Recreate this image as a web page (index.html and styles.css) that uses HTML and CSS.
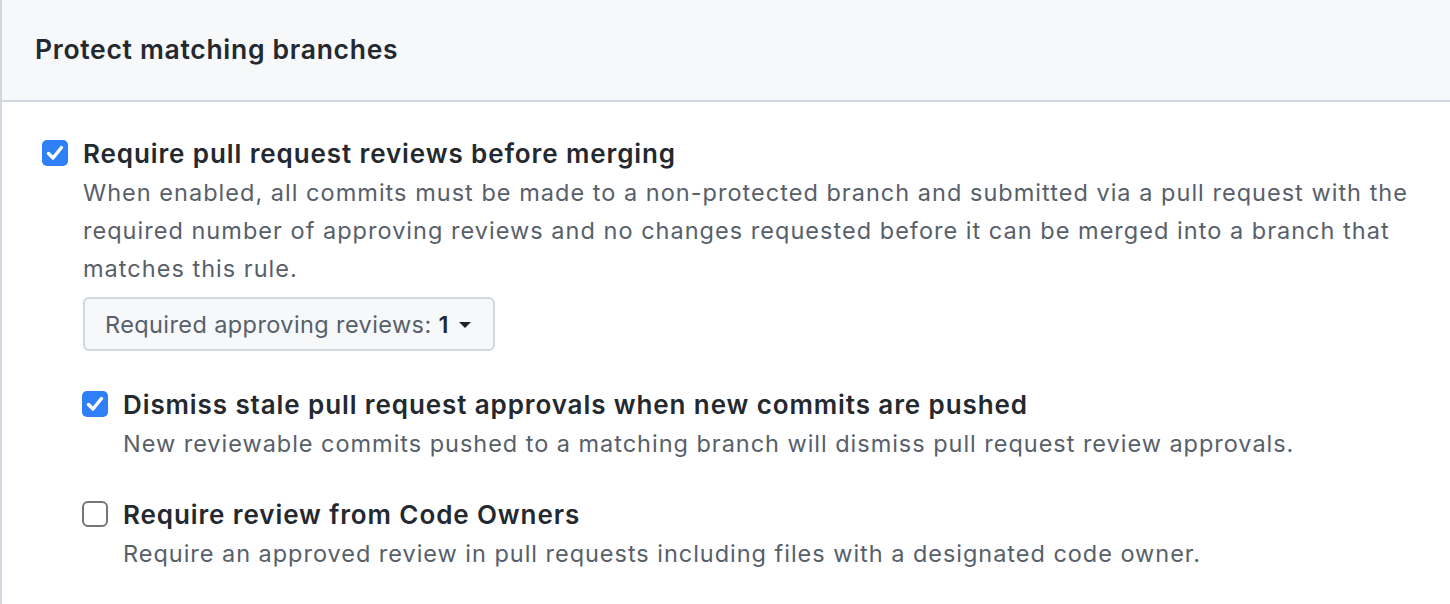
FILE: index.html
```html
<!DOCTYPE html>
<html>
<head>
<meta charset="utf-8">
<link rel="stylesheet" href="styles.css">
</head>
<body>
<div class="box">
  <div class="box-header">
    <h3 class="box-title">Protect matching branches</h3>
  </div>
  <div class="box-body">
    <div class="option">
      <span class="cb cb-checked"><svg viewBox="0 0 26 26" width="26" height="26"><rect x="0" y="0" width="26" height="26" rx="5" fill="#2f7ff6"/><path d="M6.5 13.5 L11 18 L19.5 7.5" fill="none" stroke="#fff" stroke-width="3.4" stroke-linecap="round" stroke-linejoin="round"/></svg></span>
      <div class="option-body">
        <div class="option-title">Require pull request reviews before merging</div>
        <p class="option-desc">When enabled, all commits must be made to a non-protected branch and submitted via a pull request with the required number of approving reviews and no changes requested before it can be merged into a branch that matches this rule.</p>
        <button class="select-btn" type="button">Required approving reviews:&nbsp;<strong>1</strong><span class="caret"></span></button>

        <div class="option sub">
          <span class="cb cb-checked"><svg viewBox="0 0 26 26" width="26" height="26"><rect x="0" y="0" width="26" height="26" rx="5" fill="#2f7ff6"/><path d="M6.5 13.5 L11 18 L19.5 7.5" fill="none" stroke="#fff" stroke-width="3.4" stroke-linecap="round" stroke-linejoin="round"/></svg></span>
          <div class="option-body">
            <div class="option-title">Dismiss stale pull request approvals when new commits are pushed</div>
            <p class="option-desc">New reviewable commits pushed to a matching branch will dismiss pull request review approvals.</p>
          </div>
        </div>

        <div class="option sub sub2">
          <span class="cb cb-empty"></span>
          <div class="option-body">
            <div class="option-title">Require review from Code Owners</div>
            <p class="option-desc">Require an approved review in pull requests including files with a designated code owner.</p>
          </div>
        </div>
      </div>
    </div>
  </div>
</div>
</body>
</html>
```
FILE: styles.css
```css
* { box-sizing: border-box; }
html, body { margin: 0; padding: 0; background: #fff; }
body {
  font-family: Inter, "Noto Sans", "Liberation Sans", sans-serif;
  color: #24292f;
  width: 1450px;
  overflow: hidden;
}
.box {
  border-left: 2px solid #d0d7de;
  width: 1470px;
  height: 604px;
}
.box-header {
  background: #f6f8fa;
  border-bottom: 2px solid #d0d7de;
  height: 102px;
  padding: 0 0 0 33px;
  display: flex;
  align-items: center;
}
.box-title {
  margin: -3px 0 0 0;
  font-size: 26.5px;
  line-height: 32px;
  font-weight: 600;
  letter-spacing: 0.7px;
  color: #24292f;
}
.box-body {
  padding: 33px 0 0 40px;
}
.option {
  display: flex;
  align-items: flex-start;
}
.cb {
  flex: 0 0 26px;
  width: 26px;
  height: 26px;
  margin-top: 5px;
  margin-right: 15px;
  display: block;
}
.cb svg { display: block; }
.cb-empty {
  border: 2px solid #767676;
  border-radius: 6px;
  background: #fff;
}
.option-body {
  flex: 1;
  min-width: 0;
}
.option-title {
  font-size: 26px;
  font-weight: 600;
  line-height: 38px;
  letter-spacing: 0.9px;
  color: #24292f;
}
.option-desc {
  margin: 1px 0 0 0;
  font-size: 23.5px;
  line-height: 38px;
  color: #57606a;
  width: 1350px;
  letter-spacing: 1.02px;
}
.select-btn {
  margin-top: 9px;
  height: 54px;
  width: 412px;
  background: #f6f8fa;
  border: 2px solid #d0d7de;
  border-radius: 6px;
  font-family: inherit;
  font-size: 23.5px;
  color: #57606a;
  padding: 0 0 0 20px;
  display: flex;
  align-items: center;
  text-align: left;
  letter-spacing: 0.4px;
}
.select-btn strong {
  color: #24292f;
  font-weight: 600;
}
.caret {
  display: inline-block;
  width: 0;
  height: 0;
  border-left: 6px solid transparent;
  border-right: 6px solid transparent;
  border-top: 6px solid #1f2328;
  margin-left: 10px;
  margin-top: 1px;
}
.sub {
  margin-left: -1px;
  margin-top: 35px;
}
.sub .option-desc { width: 1310px; letter-spacing: 0.97px; }
.sub2 { margin-top: 33px; }
```
